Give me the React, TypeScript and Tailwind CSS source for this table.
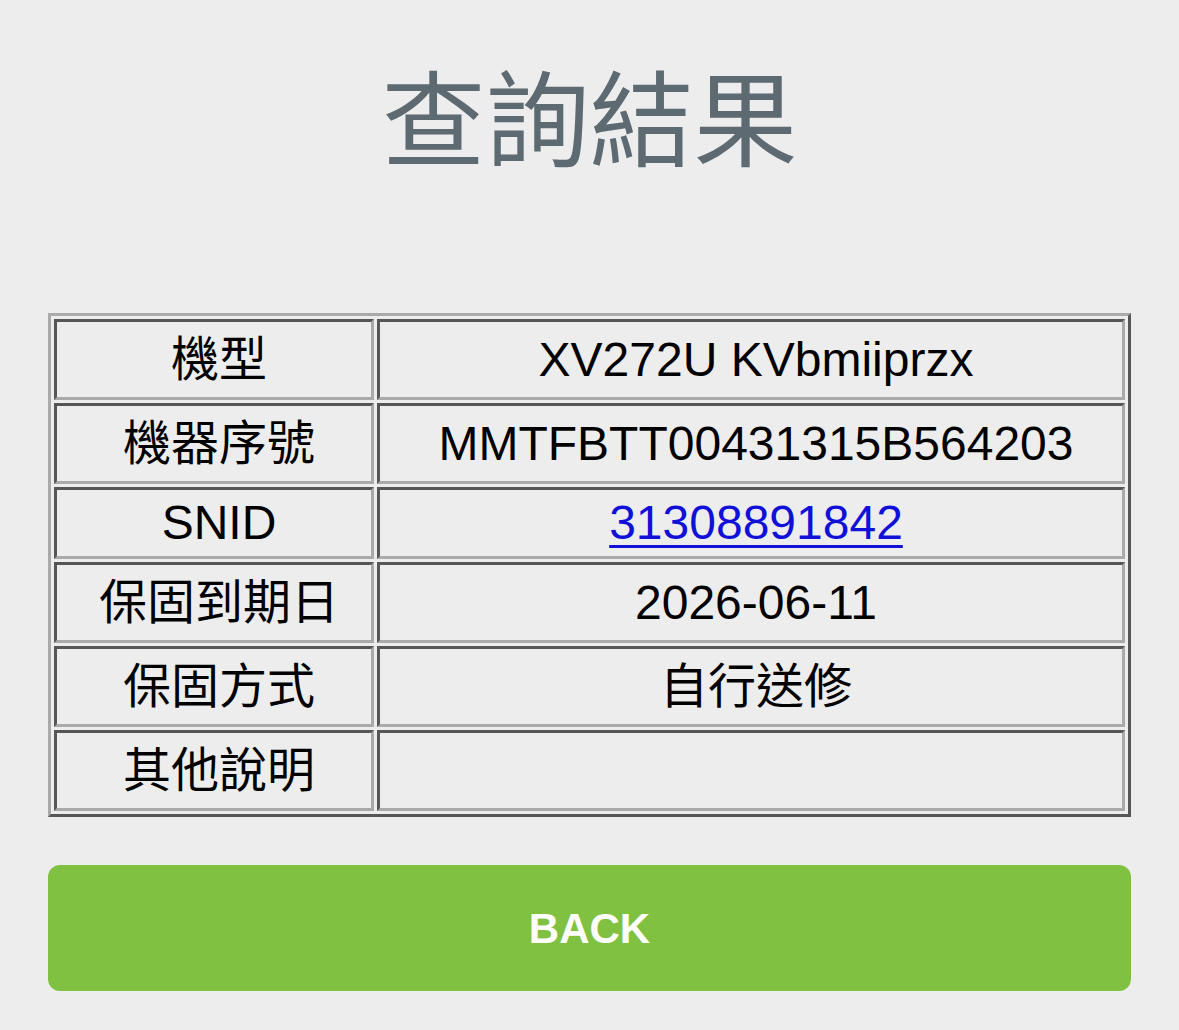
import * as React from "react";

const FONT = "font-['Liberation_Sans','Noto_Sans_CJK_TC',sans-serif]";

const rows: { label: string; value: string; link?: boolean; short?: boolean }[] = [
  { label: "機型", value: "XV272U KVbmiiprzx" },
  { label: "機器序號", value: "MMTFBTT00431315B564203" },
  { label: "SNID", value: "31308891842", link: true, short: true },
  { label: "保固到期日", value: "2026-06-11" },
  { label: "保固方式", value: "自行送修" },
  { label: "其他說明", value: "" },
];

const cell =
  "border-[3px] border-solid border-t-[#565656] border-l-[#565656] border-b-[#aaaaaa] border-r-[#aaaaaa] p-0 pl-[10px] text-center align-middle";

export default function App() {
  return (
    <div className={`min-h-[1030px] bg-[#ededed] px-[48px] ${FONT}`}>
      <div className="pt-[58px]">
        <h1 className="text-center text-[104px] leading-[112px] font-normal text-[#5e6a72] font-['Noto_Sans_CJK_TC',sans-serif]">
          查詢結果
        </h1>
      </div>

      <table className="mt-[143px] w-full border-separate border-spacing-[3px] border-[3px] border-solid border-t-[#aaaaaa] border-l-[#aaaaaa] border-b-[#565656] border-r-[#565656] text-[48px] leading-[60px] text-black">
        <tbody>
          {rows.map((r) => (
            <tr key={r.label}>
              <td className={`${cell} w-[320px] ${r.short ? "h-[72px]" : "h-[81px]"}`}>{r.label}</td>
              <td className={cell}>
                {r.link ? (
                  <a href="#" className="text-[#1010d8] underline decoration-[3px] underline-offset-[6px]">
                    {r.value}
                  </a>
                ) : (
                  r.value
                )}
              </td>
            </tr>
          ))}
        </tbody>
      </table>

      <button className="mt-[48px] flex h-[126px] w-full items-center justify-center rounded-[12px] bg-[#80c142] text-[42px] font-bold text-white">
        BACK
      </button>
    </div>
  );
}
